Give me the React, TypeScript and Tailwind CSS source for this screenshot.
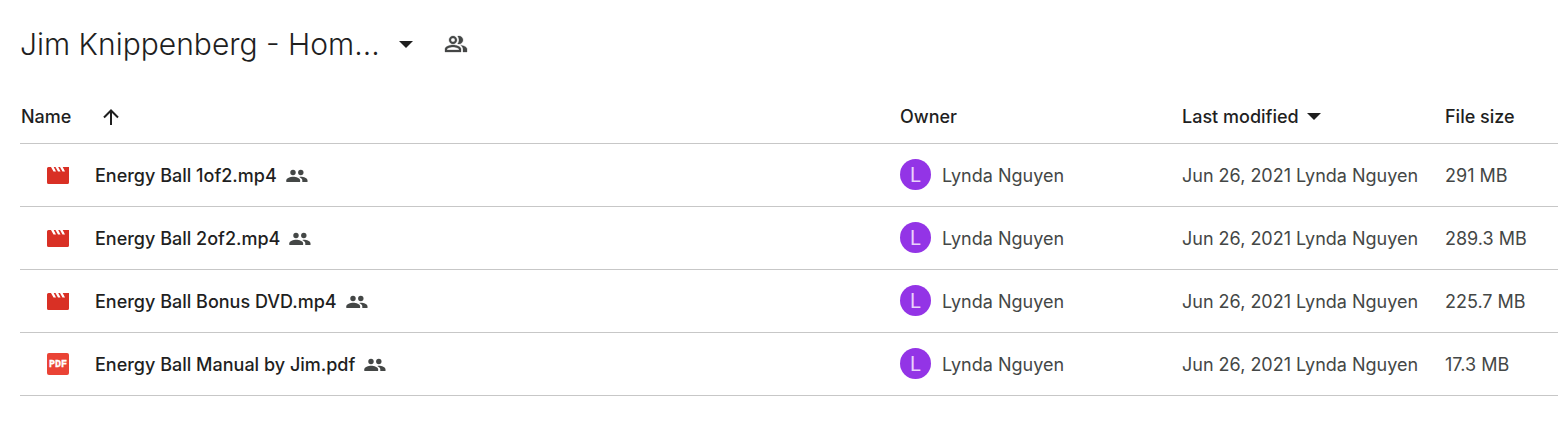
type FileKind = "video" | "pdf";

interface DriveFile {
  name: string;
  kind: FileKind;
  owner: string;
  modified: string;
  size: string;
}

const files: DriveFile[] = [
  { name: "Energy Ball 1of2.mp4", kind: "video", owner: "Lynda Nguyen", modified: "Jun 26, 2021", size: "291 MB" },
  { name: "Energy Ball 2of2.mp4", kind: "video", owner: "Lynda Nguyen", modified: "Jun 26, 2021", size: "289.3 MB" },
  { name: "Energy Ball Bonus DVD.mp4", kind: "video", owner: "Lynda Nguyen", modified: "Jun 26, 2021", size: "225.7 MB" },
  { name: "Energy Ball Manual by Jim.pdf", kind: "pdf", owner: "Lynda Nguyen", modified: "Jun 26, 2021", size: "17.3 MB" },
];

function VideoIcon() {
  return (
    <svg viewBox="0 0 22 22" className="size-[22px] shrink-0" aria-hidden="true">
      <path
        fill="#d93025"
        d="M1.500 3H4L6.500 7.500H9L6.700 3H8.500L11 7.500H13.500L11.200 3H13L15.500 7.500H18L15.700 3H22V18.400A1.600 1.600 0 0 1 20.400 20H1.600A1.600 1.600 0 0 1 0 18.400V4.500A1.500 1.500 0 0 1 1.500 3Z"
      />
    </svg>
  );
}

function PdfIcon() {
  return (
    <svg viewBox="0 0 22 22" className="size-[22px] shrink-0" aria-hidden="true">
      <rect width="22" height="22" rx="2" fill="#ea4335" />
      <text
        x="11"
        y="14"
        textAnchor="middle"
        fill="#fff"
        stroke="#fff"
        strokeWidth="0.3"
        className="font-['Liberation_Mono',monospace] text-[10px] font-bold"
      >
        PDF
      </text>
    </svg>
  );
}

function SharedIcon() {
  return (
    <svg viewBox="0 0 22 22" className="size-[22px] shrink-0" fill="#444746" role="img" aria-label="Shared">
      <circle cx="7" cy="8.500" r="2.700" />
      <circle cx="14.800" cy="8.500" r="2.700" />
      <path d="M0.300 18v-1.700c0-2.300 4.100-3.600 6.900-3.600s6.900 1.300 6.900 3.600V18z" />
      <path d="M13.300 12.900c3.200-.6 8.200.9 8.200 3.400V18h-5.200v-1.700c0-1.500-1.400-2.500-3-3.400z" />
    </svg>
  );
}

function PeopleOutlineIcon() {
  return (
    <svg
      viewBox="0 0 24 24"
      className="size-6"
      fill="#444746"
      stroke="#444746"
      strokeWidth="0.3"
      aria-hidden="true"
    >
      <path
        fillRule="evenodd"
        d="M9 12c2.210 0 4-1.790 4-4s-1.790-4-4-4-4 1.790-4 4 1.790 4 4 4zm0-6c1.100 0 2 .9 2 2s-.9 2-2 2-2-.9-2-2 .9-2 2-2zM9 13c-2.670 0-8 1.340-8 4v3h16v-3c0-2.660-5.330-4-8-4zm6 5H3v-.990C3.200 16.290 6.300 15 9 15s5.800 1.290 6 2v1z"
      />
      <path d="M15 12c2.210 0 4-1.790 4-4s-1.790-4-4-4c-.47 0-.91.1-1.330.24C14.500 5.270 15 6.580 15 8s-.5 2.730-1.330 3.760c.42.14.86.24 1.330.24zM16.670 13.130C18.040 14.060 19 15.320 19 17v3h4v-3c0-2.180-3.580-3.470-6.330-3.870z" />
    </svg>
  );
}

function Caret() {
  return (
    <svg viewBox="0 0 14 7" className="h-[7px] w-[14px] shrink-0" fill="#1f1f1f" aria-hidden="true">
      <path d="M0 0h14L7 7z" />
    </svg>
  );
}

export default function App() {
  return (
    <main className="bg-white font-['Inter',sans-serif] text-[#1f1f1f]">
      <header className="flex h-[88px] items-center pl-5">
        <h1 className="font-light">
          <button type="button" className="flex items-center gap-[19px] text-[30px] leading-10">
            Jim Knippenberg - Hom...
            <Caret />
          </button>
        </h1>
        <button type="button" aria-label="Manage access" className="ml-[31px]">
          <PeopleOutlineIcon />
        </button>
      </header>

      <div className="pl-5">
        <table className="w-full table-fixed border-collapse text-left text-lg">
          <colgroup>
            <col />
            <col className="w-[282px]" />
            <col className="w-[263px]" />
            <col className="w-[113px]" />
          </colgroup>
          <thead>
            <tr className="h-[55px] border-b border-[#c7c7c7]">
              <th className="px-0 pt-[3px] pb-0 font-medium">
                <button type="button" className="flex items-center gap-8 pl-px" aria-label="Name, ascending">
                  Name
                  <svg viewBox="0 0 16 16" className="size-4" fill="none" stroke="#1f1f1f" strokeWidth="2" aria-hidden="true">
                    <path d="M8 16V1.500M1 8.500l7-7 7 7" />
                  </svg>
                </button>
              </th>
              <th className="px-0 pt-[3px] pb-0 font-medium">Owner</th>
              <th className="px-0 pt-[3px] pb-0 font-medium">
                <button type="button" className="flex items-center gap-2">
                  Last modified
                  <Caret />
                </button>
              </th>
              <th className="px-0 pt-[3px] pb-0 font-medium">File size</th>
            </tr>
          </thead>
          <tbody className="text-[#444746]">
            {files.map((file) => (
              <tr key={file.name} className="h-[63px] border-b border-[#c7c7c7]">
                <td className="p-0">
                  <div className="flex items-center pl-[27px] font-medium text-[#1f1f1f]">
                    {file.kind === "video" ? <VideoIcon /> : <PdfIcon />}
                    <span className="mr-[9px] ml-[26px] pt-0.5 whitespace-nowrap">{file.name}</span>
                    <SharedIcon />
                  </div>
                </td>
                <td className="p-0">
                  <div className="flex items-center gap-[11px]">
                    <span className="flex size-[31px] items-center justify-center rounded-full bg-[#9334e6] font-['Roboto',sans-serif] text-xl text-[#e9d2fb]">
                      {file.owner[0]}
                    </span>
                    <span className="pt-0.5">{file.owner}</span>
                  </div>
                </td>
                <td className="px-0 pt-0.5 pb-0 whitespace-nowrap">
                  {file.modified} {file.owner}
                </td>
                <td className="px-0 pt-0.5 pb-0 whitespace-nowrap">{file.size}</td>
              </tr>
            ))}
          </tbody>
        </table>
      </div>
    </main>
  );
}
